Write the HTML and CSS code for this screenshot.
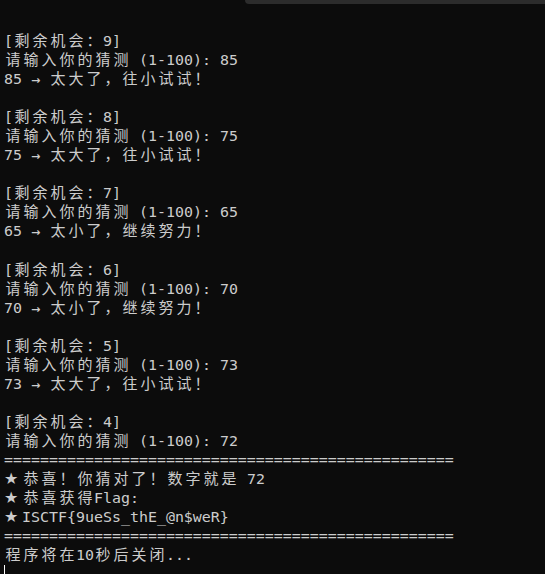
FILE: index.html
```html
<!DOCTYPE html>
<html lang="zh">
<head>
<meta charset="utf-8">
<link rel="stylesheet" href="styles.css">
<title>Terminal</title>
</head>
<body>
<div class="window">
<div class="topbar"><div class="tab"></div></div>
<pre class="term">
[<span class="w">剩余机会：</span>9]
<span class="w">请输入你的猜测</span> (1-100): 85
85 <span class="s arrow">→</span> <span class="w">太大了，往小试试！</span>

[<span class="w">剩余机会：</span>8]
<span class="w">请输入你的猜测</span> (1-100): 75
75 <span class="s arrow">→</span> <span class="w">太大了，往小试试！</span>

[<span class="w">剩余机会：</span>7]
<span class="w">请输入你的猜测</span> (1-100): 65
65 <span class="s arrow">→</span> <span class="w">太小了，继续努力！</span>

[<span class="w">剩余机会：</span>6]
<span class="w">请输入你的猜测</span> (1-100): 70
70 <span class="s arrow">→</span> <span class="w">太小了，继续努力！</span>

[<span class="w">剩余机会：</span>5]
<span class="w">请输入你的猜测</span> (1-100): 73
73 <span class="s arrow">→</span> <span class="w">太大了，往小试试！</span>

[<span class="w">剩余机会：</span>4]
<span class="w">请输入你的猜测</span> (1-100): 72
==================================================
<span class="s star">★</span> <span class="w">恭喜！你猜对了！数字就是</span> 72
<span class="s star">★</span> <span class="w">恭喜获得</span>Flag:
<span class="s star">★</span> ISCTF{9ueSs_thE_@n$weR}
==================================================
<span class="w">程序将在</span>10<span class="w">秒后关闭</span>...
<span class="cursor"></span></pre>
</div>
</body>
</html>
```

FILE: styles.css
```css
html, body {
  margin: 0;
  padding: 0;
  background: #0c0c0c;
}
.window {
  width: 545px;
  height: 574px;
  overflow: hidden;
  background: #0c0c0c;
}
.topbar {
  display: flex;
  justify-content: flex-end;
  height: 4px;
}
.tab {
  width: 300px;
  height: 4px;
  background: #2c2c2c;
  border-bottom-left-radius: 4px;
}
.term {
  margin: 0;
  padding: 28px 0 0 4px;
  font-family: "DejaVu Sans Mono", "Liberation Mono", monospace;
  font-size: 14.95px;
  line-height: 19.05px;
  color: #cccccc;
  white-space: pre;
}
.w {
  font-family: "Noto Sans CJK SC", sans-serif;
  font-size: 15px;
  line-height: 0;
  letter-spacing: 3px;
  margin-left: 1.5px;
  margin-right: -1.5px;
}
.s {
  display: inline-block;
  width: 9px;
  line-height: 0;
  font-family: "DejaVu Sans", sans-serif;
  text-align: center;
}
.arrow {
  font-size: 11px;
  font-weight: bold;
}
.star {
  font-size: 16px;
}
.cursor {
  display: inline-block;
  width: 1px;
  height: 19px;
  background: #ffffff;
  vertical-align: top;
}
```
